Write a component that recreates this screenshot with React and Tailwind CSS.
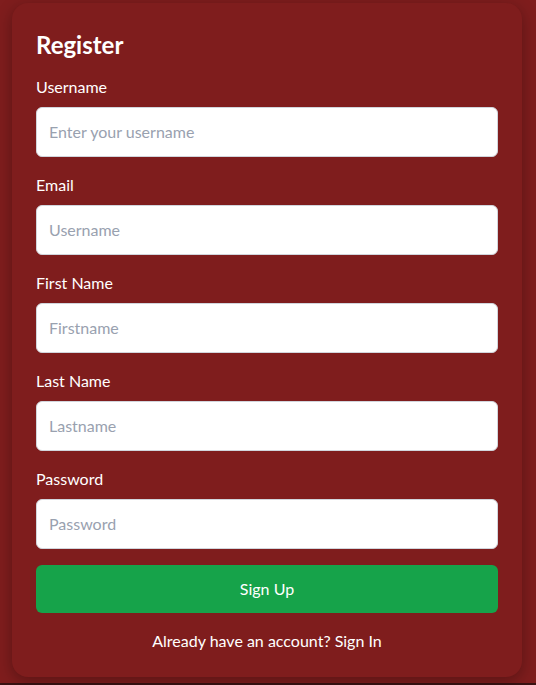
export default function App() {
  const fields = [
    { label: "Username", ph: "Enter your username", type: "text" },
    { label: "Email", ph: "Username", type: "email" },
    { label: "First Name", ph: "Firstname", type: "text" },
    { label: "Last Name", ph: "Lastname", type: "text" },
    { label: "Password", ph: "Password", type: "password" },
  ];
  return (
    <div className="h-[685px] bg-[#3a1212] overflow-hidden" style={{ fontFamily: '"Segoe UI", Lato, "Open Sans", sans-serif' }}>
      <div className="h-[683px] bg-[#7f1d1d] pt-[3px]">
        <div className="mx-[12px] w-[510px] rounded-2xl bg-[#7f1d1d] p-6 shadow-[0_4px_16px_rgba(0,0,0,0.3)]">
          <h2 className="mb-3 text-2xl font-bold leading-9 text-white">Register</h2>
          {fields.map((f) => (
            <div key={f.label} className="mb-4">
              <label className="mb-2 block text-base leading-6 text-white">{f.label}</label>
              <input
                type={f.type}
                placeholder={f.ph}
                className="block w-full rounded-md border border-gray-300 bg-white px-3 py-3 text-base leading-6 text-gray-900 placeholder:text-gray-400 outline-none"
              />
            </div>
          ))}
          <button className="block h-12 w-full rounded-md bg-[#16a34a] text-base leading-6 text-white">Sign Up</button>
          <p className="mt-4 text-center text-base leading-6 text-white">Already have an account? Sign In</p>
        </div>
      </div>
    </div>
  );
}
